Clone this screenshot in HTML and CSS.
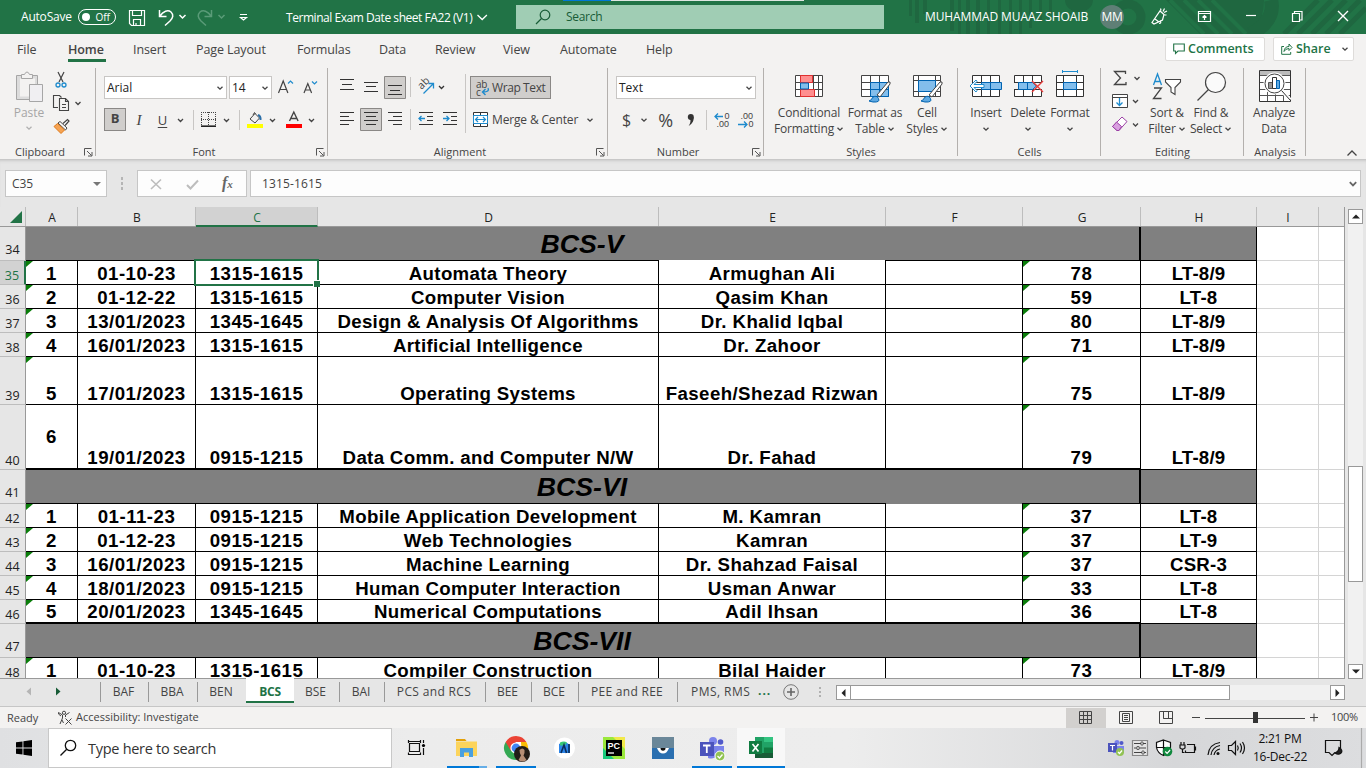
FILE: index.html
```html
<!DOCTYPE html>
<html lang="en">
<head>
<meta charset="utf-8">
<title>Terminal Exam Date sheet FA22 (V1) - Excel</title>
<link rel="stylesheet" href="styles.css">
</head>
<body>
<svg class="defs" width="0" height="0"><defs>
<symbol id="chev" viewBox="0 0 8 8"><path d="M1.500 2.700 4 5.200 6.500 2.700" fill="none" stroke="currentColor" stroke-width="1.300"/></symbol>
<symbol id="launch" viewBox="0 0 9 9"><path d="M.5 7.500V.5H7.500M3 3l4.500 4.500M8 4v4H4" fill="none" stroke="#555" stroke-width="1"/></symbol>
</defs></svg>
<div class="app">

<header class="titlebar">
  <svg class="pattern" width="460" height="34" viewBox="906 0 460 34">
    <g fill="#1f6740"><path d="M909 0h3v16h-3zM915 0h4v23h-4zM923 0h4v14h-4zM950 0h4v31h-4zM958 0h3v34h-3zM966 0h4v34h-4zM976 0h4v34h-4zM987 0h3v34h-3zM998 0h3v34h-3zM1009 0h3v34h-3zM1019 0h3v34h-3zM1029 0h3v28h-3zM1039 0h3v22h-3zM1049 0h3v14h-3z"/><path d="M1065 0h28a14 12 0 0 1-28 0z"/><path d="M1166 0h98a64 64 0 0 1-10 34h-54z"/></g>
    <circle cx="1128" cy="17" r="13" fill="none" stroke="#1f6740" stroke-width="9"/>
    <path d="M1170 0l34 34M1184 0l34 34M1198 0l34 34M1212 0l34 34" stroke="#217346" stroke-width="4"/>
    <path d="M1284 34l34-34M1298 34l34-34M1312 34l34-34M1326 34l34-34M1340 34l26-26" stroke="#1f6740" stroke-width="5"/>
    <path d="M1251 34q25-14 20-34" stroke="#1f6740" stroke-width="14" fill="none"/>
  </svg>
  <div class="topstrip"><i></i></div>
  <span class="autosave">AutoSave</span>
  <span class="toggle"><i></i><b>Off</b></span>
  <svg class="qat" width="136" height="34" viewBox="120 0 136 34" fill="none" stroke="#fff" stroke-width="1.200">
    <path d="M129.500 10.500h15v15h-13l-2-2zM132.500 10.500v5h9v-5M133.500 25.500v-6h7v6M136 23v2"/>
    <path d="M159.500 10v6.500h7M160 16c3-5 8-6.500 11-4 3 3 2 6-1 9l-5 4.500" stroke-width="1.500"/>
    <path d="M179.500 15l3 3 3-3" stroke-width="1.500"/>
    <g stroke="#5a9b78"><path d="M211.500 10v6.500h-7M211 16c-3-5-8-6.500-11-4-3 3-2 6 1 9l5 4.500" stroke-width="1.500"/><path d="M218.500 15l3 3 3-3" stroke-width="1.500"/></g>
    <path d="M240 14.500h7M240.500 17.500l3 2.500 3-2.500z"/>
  </svg>
  <span class="doc">Terminal Exam Date sheet FA22 (V1)</span>
  <svg class="doc-chev" width="12" height="34" viewBox="476 0 12 34"><path d="M477.500 15l4.700 4.500 4.700-4.500" fill="none" stroke="#fff" stroke-width="1.300"/></svg>
  <div class="search"><svg width="16" height="18" viewBox="535 8 16 18" fill="none" stroke="#185c37" stroke-width="1.200"><circle cx="545" cy="15" r="4.800"/><path d="M541.500 18.500l-5.500 5.500"/></svg><span>Search</span></div>
  <span class="user">MUHAMMAD MUAAZ SHOAIB</span>
  <span class="avatar">MM</span>
  <svg class="winctl" width="230" height="34" viewBox="1136 0 230 34" fill="none" stroke="#fff" stroke-width="1.200">
    <path d="M1152 22.500l8-11.500 4 3.500-1.500 5.500-8.500 4zM1155 19l4 3M1160 20.500q2 3-1 3M1160.500 8.500l.5 2M1164.500 8.500l-1.500 3M1167 11l-3 1.500M1166.500 15h-2"/>
    <path d="M1198.500 11.500h12v10h-12zM1198.500 13.500h12M1204.500 20v-4.500M1202.500 17.500l2-2 2 2"/>
    <path d="M1246 15.500h10"/>
    <path d="M1292.500 13.500h7v8h-7zM1294.500 13.500v-2h7.500v8.500h-2.500"/>
    <path d="M1338 11l10 10M1348 11l-10 10" stroke-width="1.400"/>
  </svg>
</header>

<nav class="tabs">
  <span class="t-file">File</span><span class="t-home">Home</span><span class="t-insert">Insert</span><span class="t-page">Page Layout</span><span class="t-form">Formulas</span><span class="t-data">Data</span><span class="t-rev">Review</span><span class="t-view">View</span><span class="t-auto">Automate</span><span class="t-help">Help</span>
  <div class="tab-actions">
    <button class="act comments"><svg width="12" height="12" viewBox="0 0 12 12"><path d="M.7 1h10.600v7H5L2.500 10.500V8H.7z" fill="none" stroke="#217346" stroke-width="1.100"/></svg>Comments</button>
    <button class="act share"><svg width="12" height="12" viewBox="0 0 12 12" fill="none" stroke="#217346"><path d="M3 3.500H.7v7.800h9V9M3 8.500q.5-5 5-5V1l3 3.500-3 3V5.500Q4.500 5.500 3 8.500z"/></svg>Share<svg class="chev" width="8" height="8"><use href="#chev"/></svg></button>
  </div>
</nav>

<section class="ribbon">
  <div class="group g-clip">
    <div class="gbody">
      <div class="paste"><svg width="34" height="36" viewBox="14 69 34 36" fill="none" stroke="#a6a6a6"><path d="M18.500 75.500h21v24h-21z" fill="#dcdcdc"/><path d="M22 78.500v18h9v-12h6v-6z" fill="#f3f2f1" stroke="none"/><path d="M23.500 78.500v-4h3q1-2.500 2.500-2.500t2.500 2.500h3v4z" fill="#f3f2f1"/><path d="M31.500 84.500h13v17h-13z" fill="#f0eff2"/></svg><span>Paste</span><svg class="chev" width="8" height="8"><use href="#chev"/></svg></div>
      <svg width="34" height="72" viewBox="51 68 34 72" fill="none" stroke="#444">
        <path d="M58 72l5 10M64 72l-5 10" stroke-width="1.200"/><g stroke="#1e8bcd" stroke-width="1.300"><circle cx="58" cy="85" r="2"/><circle cx="64" cy="85" r="2"/></g>
        <path d="M58 107.500h-4.500v-12h6l2 2M60.500 98.500h5l3 3v9h-9v-12zM65.500 98.500v3h3M62 104.500h4M62 107.500h4" stroke-width="1.100"/><path d="M75.500 102l2.500 2.500 2.500-2.500" stroke-width="1.300"/>
        <path d="M63 123.500l4.500-4 1.500 1.500-4 4.500" fill="#fff" stroke-width="1.200"/><path d="M60 121.500l7 6.500-1.500 2-7.500-7z" fill="#fff"/><path d="M57.500 123.500l7 6.500-3.500 3.500-7-7z" fill="#f5a353" stroke="#e07b1a"/>
      </svg>
    </div>
    <div class="glabel">Clipboard<svg width="9" height="9"><use href="#launch"/></svg></div>
  </div>

  <div class="group g-font">
    <div class="grows">
      <div class="row1"><span class="combo c-font">Arial<svg class="chev" width="8" height="8"><use href="#chev"/></svg></span><span class="combo c-size">14<svg class="chev" width="8" height="8"><use href="#chev"/></svg></span>
      <svg width="48" height="22" viewBox="275 76 48 22" fill="none" stroke="#444" stroke-width="1.200"><path d="M278.500 92l4.700-12 4.700 12M280 88.500h6.500M304 92l3.800-9.500 3.800 9.500M305.500 89h5"/><path d="M288 82.500l2.500-2.500 2.500 2.500M312 80.500l2.500 2.500 2.500-2.500" stroke="#1e8bcd"/></svg></div>
      <div class="row2"><span class="bold-btn">B</span><span class="it-btn">I</span><span class="un-btn">U</span>
      <svg width="150" height="22" viewBox="173 108 150 22" fill="none" stroke="#444">
        <g stroke-width="1.300"><path d="M178 118l2.500 2.500 2.500-2.500M224 118l2.500 2.500 2.500-2.500M270 118l2.500 2.500 2.500-2.500M309 118l2.500 2.500 2.500-2.500"/></g>
        <path d="M193.500 109v20M239.500 109v20" stroke="#c8c6c4"/>
        <path d="M201.500 111v13M208.500 111v13M215.500 111v13M201 111.500h15M201 118.500h15" stroke-dasharray="1 1"/><path d="M201 125.200h15" stroke="#222" stroke-width="1.600"/>
        <path d="M250 118l5-5.500 4.500 4.500-4.500 5zM253 114l1.500-2.500 1 1.500"/><path d="M258 114q3 1 2.500 5" stroke="#2b6fa8" stroke-width="2"/><path d="M247 123h16v4h-16z" fill="#ff0" stroke="none"/>
        <path d="M289.500 120l4.300-9 4.300 9M291 117.500h6" stroke-width="1.400"/><path d="M286 123h16v4h-16z" fill="red" stroke="none"/>
      </svg></div>
    </div>
    <div class="glabel">Font<svg width="9" height="9"><use href="#launch"/></svg></div>
  </div>

  <div class="group g-align">
    <div class="gbody">
    <svg width="142" height="72" viewBox="328 68 142 72" fill="none" stroke="#333">
      <path d="M384.500 76.500h21v22h-21zM360.500 108.500h21v22h-21z" fill="#d0cecc" stroke="#8a8886"/>
      <path d="M340 79.500h14M342 84.500h10M340 89.500h14M364 82.500h14M366 86.500h10M364 91.500h14M388 85.500h14M390 90.500h10M388 94.500h14"/>
      <path d="M340 112.500h14M340 116.500h9M340 120.500h14M340 124.500h9M364 112.500h14M366 116.500h10M364 120.500h14M366 124.500h10M388 112.500h14M393 116.500h9M388 120.500h14M393 124.500h9"/>
      <path d="M410.500 77v20M410.500 109v21M465.500 74v59" stroke="#c8c6c4"/>
      <text transform="translate(421.500 90) rotate(-45)" font-size="10.500" stroke="none" fill="#444">ab</text>
      <path d="M423.500 93.500l10-10M428.500 83.500h5v5" stroke="#1e8bcd" stroke-width="1.300"/><path d="M439 86l2.500 2.500 2.500-2.500" stroke-width="1.300"/>
      <path d="M419 112.500h14M427 116.500h6M427 120.500h6M419 124.500h14M443 112.500h14M451 116.500h6M451 120.500h6M443 124.500h14"/>
      <path d="M425 118.500h-6M421.500 116l-2.500 2.500 2.500 2.500M443 118.500h6M446.500 116l2.500 2.500-2.500 2.500" stroke="#1e8bcd" stroke-width="1.300"/>
    </svg>
    <div class="wrapcol">
      <span class="wrap-btn"><svg width="16" height="18" viewBox="474 78 16 18"><text x="475" y="86.500" font-size="10" fill="#444">ab</text><text x="475" y="94.500" font-size="10" fill="#444">c</text><path d="M487 87q2 4-5 4M484.500 88l-3 3 3 3" fill="none" stroke="#1e8bcd" stroke-width="1.400"/></svg>Wrap Text</span>
      <span class="merge-btn"><svg width="16" height="16" viewBox="473 111 16 16"><path d="M473.500 111.500h14v14h-14zM480.500 111.500v3M480.500 122v3" fill="#fff" stroke="#333"/><path d="M473.500 114.500h14v8h-14z" fill="#fff" stroke="#1e8bcd"/><path d="M476 118.500h9M478 116l-2.500 2.500 2.500 2.500M483 116l2.500 2.500-2.500 2.500" fill="none" stroke="#1e8bcd" stroke-width="1.200"/></svg><span>Merge &amp; Center</span><svg class="chev" width="8" height="8"><use href="#chev"/></svg></span>
    </div></div>
    <div class="glabel">Alignment<svg width="9" height="9"><use href="#launch"/></svg></div>
  </div>

  <div class="group g-num">
    <div class="grows">
      <div class="row1"><span class="combo c-num">Text<svg class="chev" width="8" height="8"><use href="#chev"/></svg></span></div>
      <div class="row2 numrow"><span class="cur">$</span><svg class="chev" width="8" height="8"><use href="#chev"/></svg><span class="pct">%</span>
      <svg width="72" height="22" viewBox="684 108 72 22" fill="none" stroke="#1e8bcd" stroke-width="1.300"><circle cx="689.800" cy="116" r="3" fill="#333" stroke="none"/><path d="M692.700 116q.3 6-5 9 2.500-4 1.500-7z" fill="#333" stroke="none"/><path d="M705.500 109v20" stroke="#c8c6c4" stroke-width="1"/><path d="M722 115.500h-8M717 112.500l-3 3 3 3M737 123.500h9M743 120.500l3 3-3 3"/><g class="dec" fill="#444" stroke="none"><text x="723.500" y="118">0</text><text x="715.500" y="126">.00</text><text x="739.500" y="118">.00</text><text x="747.500" y="126">0</text></g></svg></div>
    </div>
    <div class="glabel">Number<svg width="9" height="9"><use href="#launch"/></svg></div>
  </div>

  <div class="group g-styles">
    <div class="gbody bigs">
      <div class="big b-cond"><svg width="30" height="36" viewBox="794 70 30 36" fill="none" stroke="#555"><path d="M795.500 75.500h27v21h-27zM800.500 75.500v21M813.500 75.500v21M818.500 75.500v21M795.500 82.500h27M795.500 89.500h27" fill="#fff" stroke="#444"/><path d="M800.500 75.500h12v7h-12zM800.500 89.500h14v7h-14z" fill="#ff8f8f" stroke="#e03030"/><path d="M800.500 83h8v6h-8z" fill="#83beec" stroke="#0063b1"/></svg><span>Conditional</span><span>Formatting<svg class="chev" width="8" height="8"><use href="#chev"/></svg></span></div>
      <div class="big b-fat"><svg width="34" height="36" viewBox="858 70 34 36" fill="none" stroke="#444"><path d="M861.500 75.500h27v21h-27zM870.500 75.500v21M879.500 75.500v21M861.500 82.500h27M861.500 89.500h27" fill="#fff"/><path d="M870.500 82.500h18v14h-18zM879.500 82.500v14M870.500 89.500h18" fill="#83beec" stroke="#0063b1"/><path d="M877 95l11-13q3-1 2 2l-10 13z" fill="#fff"/><path d="M869 101q3-1 3.500-3.500 4-3 6 1t-5.500 3.500z" fill="#5ea9e2" stroke="#0063b1"/></svg><span>Format as</span><span>Table<svg class="chev" width="8" height="8"><use href="#chev"/></svg></span></div>
      <div class="big b-cs"><svg width="34" height="36" viewBox="910 70 34 36" fill="none" stroke="#444"><path d="M913.500 75.500h27v21h-27zM918.500 75.500v21M935.500 75.500v21M913.500 80.500h27M913.500 91.500h27" fill="#fff"/><path d="M918.500 80.500h17v11h-17z" fill="#83beec" stroke="#0063b1"/><path d="M929 95l11-13q3-1 2 2l-10 13z" fill="#fff"/><path d="M921 101q3-1 3.500-3.500 4-3 6 1t-5.500 3.500z" fill="#5ea9e2" stroke="#0063b1"/></svg><span>Cell</span><span>Styles<svg class="chev" width="8" height="8"><use href="#chev"/></svg></span></div>
    </div>
    <div class="glabel">Styles</div>
  </div>

  <div class="group g-cells">
    <div class="gbody bigs">
      <div class="big b-cell"><svg width="36" height="36" viewBox="969 70 36 36" fill="none" stroke="#333"><path d="M973.500 75.500h27v21h-27zM982.500 75.500v21M991.500 75.500v21M973.500 82.500h27M973.500 89.500h27" fill="#fff"/><path d="M982.500 82.500h20v7h-20zM991.500 82.500v7" fill="#83beec" stroke="#0063b1"/><path d="M985 84.500h-10l3-3-1-1.500-6 6 6 6 1-1.500-3-3h10z" fill="#fff" stroke="#1e8bcd"/></svg><span>Insert</span><svg class="chev" width="8" height="8"><use href="#chev"/></svg></div>
      <div class="big b-cell"><svg width="36" height="36" viewBox="1011 70 36 36" fill="none" stroke="#333"><path d="M1015.500 75.500h27v21h-27zM1024.500 75.500v21M1033.500 75.500v21" fill="#fff"/><path d="M1013 83h30v6h-30z" fill="#f3f2f1" stroke="none"/><path d="M1015.500 82.500h27M1015.500 89.500h27"/><path d="M1019.500 82.500h14l4 3.500-4 3.500h-14zM1028.500 82.500v7" fill="#83beec" stroke="#0063b1"/><path d="M1033 81l11 11M1044 81l-11 11" stroke="#e83b3b" stroke-width="1.400"/></svg><span>Delete</span><svg class="chev" width="8" height="8"><use href="#chev"/></svg></div>
      <div class="big b-cell"><svg width="36" height="36" viewBox="1053 70 36 36" fill="none" stroke="#333"><path d="M1057.500 75.500h27v21h-27zM1064.500 75.500v21M1077.500 75.500v21M1057.500 82.500h27M1057.500 89.500h27" fill="#fff"/><path d="M1064.500 82.500h13v7h-13z" fill="#83beec" stroke="#0063b1"/><path d="M1063.500 71.500h15M1063.500 70v3M1078.500 70v3" stroke="#1e8bcd"/></svg><span>Format</span><svg class="chev" width="8" height="8"><use href="#chev"/></svg></div>
    </div>
    <div class="glabel">Cells</div>
  </div>

  <div class="group g-edit">
    <div class="gbody">
      <svg width="36" height="72" viewBox="1107 68 36 72" fill="none" stroke="#444"><path d="M1125.500 74v-2.500h-11l6 6.500-6 6.500h11.500V82" stroke-width="1.300"/><path d="M1112.500 94.500h15v13h-15zM1112.500 97.500h15" fill="#fff"/><path d="M1119.500 98v7M1116.500 102.500l3 3 3-3" stroke="#1e8bcd" stroke-width="1.300"/><path d="M1122 117l5 4.500-8 9h-2l-4.500-4z" fill="#fff" stroke="#9b3fa5"/><path d="M1116.500 122l5 4.500-2.500 4h-2l-4.500-4z" fill="#d9a0e0" stroke="#9b3fa5"/><path d="M1134.500 77l2.500 2.500 2.500-2.500M1133 100l2.500 2.500 2.500-2.500M1133 123.500l2.500 2.500 2.500-2.500" stroke-width="1.300"/></svg>
      <div class="big b-sort"><svg width="34" height="36" viewBox="1151 70 34 36" fill="none" stroke="#444"><path d="M1154.500 85l4-11 4 11M1156 81.500h5.500" stroke="#1e8bcd" stroke-width="1.300"/><path d="M1155 88h7.500l-8 10.500h8" stroke-width="1.300"/><path d="M1166.500 79.500h15v2.500l-5.500 5.500v7l-4-2.500v-4.500l-5.500-5.500z" fill="#fff" stroke-width="1.100"/></svg><span>Sort &amp;</span><span>Filter<svg class="chev" width="8" height="8"><use href="#chev"/></svg></span></div>
      <div class="big b-find"><svg width="34" height="36" viewBox="1194 70 34 36" fill="none" stroke="#444" stroke-width="1.200"><circle cx="1215.500" cy="82.500" r="10" fill="#fafafa"/><path d="M1208.500 89.500l-11 11"/></svg><span>Find &amp;</span><span>Select<svg class="chev" width="8" height="8"><use href="#chev"/></svg></span></div>
    </div>
    <div class="glabel">Editing</div>
  </div>

  <div class="group g-an">
    <div class="gbody bigs">
      <div class="big b-an"><svg width="36" height="36" viewBox="1256 70 36 36" fill="none" stroke="#555"><path d="M1259.500 70.500h31v31h-31z" fill="#fff" stroke="#333"/><path d="M1260 71h30v4h-30z" fill="#bbb" stroke="none"/><path d="M1260 75.500h30M1260 82.500h30M1260 89.500h30M1260 95.500h30M1267.500 90v11M1275.500 90v11M1283.500 90v11"/><path d="M1282 90.500l8 9.500" stroke="#fff" stroke-width="4"/><circle cx="1274.500" cy="83.500" r="11" fill="#fff" stroke="none"/><circle cx="1274.500" cy="83.500" r="9.500" fill="#fff" stroke="#444"/><path d="M1281.500 90.500l9 10" stroke="#333"/><path d="M1268.500 82.500h4v6h-4z" fill="#999" stroke="#555"/><path d="M1272.500 77.500h4v11h-4z" fill="#fff" stroke="#333"/><path d="M1276.500 80.500h3v8h-3z" fill="#5ea9e2" stroke="#0063b1"/></svg><span>Analyze</span><span>Data</span></div>
    </div>
    <div class="glabel">Analysis</div>
  </div>
  <svg class="collapse" width="14" height="10" viewBox="0 0 14 10"><path d="M2.500 7.500 7 3l4.500 4.500" fill="none" stroke="#444" stroke-width="1.300"/></svg>
</section>

<section class="fbar">
  <div class="namebox">C35<i></i></div>
  <div class="fdots"><i></i><i></i><i></i></div>
  <div class="fbtns"><svg width="60" height="16" viewBox="147 176 60 16" fill="none" stroke="#bdbdbd" stroke-width="1.600"><path d="M150 179.500l10 9.500M160 179.500l-10 9.500"/><path d="M186 185l3.500 3.500 7.500-8" stroke-width="2"/></svg><span>f<small>x</small></span></div>
  <div class="finput"><span>1315-1615</span><svg width="8" height="8"><path d="M.800 2.200 4 5.400 7.200 2.200" fill="none" stroke="#666" stroke-width="1.800"/></svg></div>
</section>

<section class="work">
  <div class="sheet">
    <div class="cols"><span class="corner"><i></i></span><span>A</span><span>B</span><span class="sel">C</span><span>D</span><span>E</span><span>F</span><span>G</span><span>H</span><span>I</span><span></span></div>
    <div class="r band gapE"><b>34</b><em>BCS-V</em><u></u><s></s><s></s></div>
    <div class="r act35"><b>35</b><p class="f">1</p><p>01-10-23</p><p class="cur35">1315-1615</p><p>Automata Theory</p><p>Armughan Ali</p><p></p><p class="f">78</p><p>LT-8/9</p><s></s><s></s></div>
    <div class="r"><b>36</b><p class="f">2</p><p>01-12-22</p><p>1315-1615</p><p>Computer Vision</p><p>Qasim Khan</p><p></p><p class="f">59</p><p>LT-8</p><s></s><s></s></div>
    <div class="r"><b>37</b><p class="f">3</p><p>13/01/2023</p><p>1345-1645</p><p>Design &amp; Analysis Of Algorithms</p><p>Dr. Khalid Iqbal</p><p></p><p class="f">80</p><p>LT-8/9</p><s></s><s></s></div>
    <div class="r"><b>38</b><p class="f">4</p><p>16/01/2023</p><p>1315-1615</p><p>Artificial Intelligence</p><p>Dr. Zahoor</p><p></p><p class="f">71</p><p>LT-8/9</p><s></s><s></s></div>
    <div class="r h48"><b>39</b><p class="f">5</p><p>17/01/2023</p><p>1315-1615</p><p>Operating Systems</p><p>Faseeh/Shezad Rizwan</p><p></p><p class="f">75</p><p>LT-8/9</p><s></s><s></s></div>
    <div class="r h65 thick"><b>40</b><p class="mid">6</p><p>19/01/2023</p><p>0915-1215</p><p>Data Comm. and Computer N/W</p><p>Dr. Fahad</p><p></p><p class="f">79</p><p>LT-8/9</p><s></s><s></s></div>
    <div class="r band gapF"><b>41</b><em>BCS-VI</em><u></u><s></s><s></s></div>
    <div class="r"><b>42</b><p class="f">1</p><p>01-11-23</p><p>0915-1215</p><p>Mobile Application Development</p><p>M. Kamran</p><p></p><p class="f">37</p><p>LT-8</p><s></s><s></s></div>
    <div class="r"><b>43</b><p class="f">2</p><p>01-12-23</p><p>0915-1215</p><p>Web Technologies</p><p>Kamran</p><p></p><p class="f">37</p><p>LT-9</p><s></s><s></s></div>
    <div class="r"><b>44</b><p class="f">3</p><p>16/01/2023</p><p>0915-1215</p><p>Machine Learning</p><p>Dr. Shahzad Faisal</p><p></p><p class="f">37</p><p>CSR-3</p><s></s><s></s></div>
    <div class="r"><b>45</b><p class="f">4</p><p>18/01/2023</p><p>0915-1215</p><p>Human Computer Interaction</p><p>Usman Anwar</p><p></p><p class="f">33</p><p>LT-8</p><s></s><s></s></div>
    <div class="r thick"><b>46</b><p class="f">5</p><p>20/01/2023</p><p>1345-1645</p><p>Numerical Computations</p><p>Adil Ihsan</p><p></p><p class="f">36</p><p>LT-8</p><s></s><s></s></div>
    <div class="r band"><b>47</b><em>BCS-VII</em><u></u><s></s><s></s></div>
    <div class="r"><b>48</b><p class="f">1</p><p>01-10-23</p><p>1315-1615</p><p>Compiler Construction</p><p>Bilal Haider</p><p></p><p class="f">73</p><p>LT-8/9</p><s></s><s></s></div>
  </div>
  <div class="vscroll"><span class="sbtn"><svg width="8" height="5"><path d="M0 4.500h8L4 .5z" fill="#222"/></svg></span><span class="vtrack"><i></i></span><span class="sbtn"><svg width="8" height="5"><path d="M0 .5h8L4 4.500z" fill="#222"/></svg></span></div>
</section>

<section class="sheettabs">
  <svg width="100" height="27" viewBox="0 679 100 27"><path d="M31 687.500v8l-4.500-4z" fill="#b5b5b5"/><path d="M56 687.500v8l4.500-4z" fill="#185c37"/></svg>
  <span class="st s48">BAF</span><span class="st s49">BBA</span><span class="st s49 nb">BEN</span><span class="st on">BCS</span><span class="st s45 nb2">BSE</span><span class="st s45">BAI</span><span class="st s101">PCS and RCS</span><span class="st s46">BEE</span><span class="st s47">BCE</span><span class="st s99">PEE and REE</span><span class="pms">PMS, RMS</span><span class="more">...</span>
  <svg width="60" height="27" viewBox="776 679 60 27"><circle cx="791" cy="692" r="7.300" fill="none" stroke="#777"/><path d="M787 692h8M791 688v8" stroke="#666" stroke-width="1.600"/><path d="M819 687h2v2h-2zM819 691h2v2h-2zM819 695h2v2h-2z" fill="#b0b0b0"/></svg>
  <div class="hscroll"><span class="sbtn"><svg width="5" height="8"><path d="M4.500 0v8L.5 4z" fill="#222"/></svg></span><span class="hthumb"></span><span class="htrack"></span><span class="sbtn"><svg width="5" height="8"><path d="M.5 0v8l4-4z" fill="#222"/></svg></span></div>
</section>

<section class="status">
  <span class="ready">Ready</span>
  <svg width="16" height="16" viewBox="57 709 16 16" fill="none" stroke="#444"><circle cx="64" cy="711.800" r="1.600"/><path d="M58.500 711.500l4 2.500v3l-2.500 6M69.500 711.500l-4 2.500v2M62 719l1.500 3M58.500 711.500q-1 1.500 2.500 3.500M65.500 717.500l6 6M71.500 717.500l-6 6"/></svg>
  <span class="access">Accessibility: Investigate</span>
  <svg class="views" width="264" height="20" viewBox="1066 707 264 20" fill="none" stroke="#444">
    <path d="M1066 707h40v20h-40z" fill="#d2d0ce" stroke="none"/>
    <path d="M1079.500 710.500h12v12h-12zM1083.500 710.500v12M1087.500 710.500v12M1079.500 714.500h12M1079.500 718.500h12"/>
    <path d="M1119.500 710.500h13v12h-13zM1122.500 712.500h7v8h-7zM1124 714.500h4M1124 716.500h4M1124 718.500h4"/>
    <path d="M1159.500 710.500h13v12h-13zM1163.500 710.500v7h5v-7M1163.500 717.500h9"/>
    <path d="M1192 716.500h8M1205 717.500h100M1310 716.500h8M1314 712.500v8"/><path d="M1253 711h5v11h-5z" fill="#333" stroke="none"/>
  </svg>
  <span class="zoom">100%</span>
</section>

<footer class="taskbar">
  <svg width="48" height="40" viewBox="0 728 48 40"><path d="M16 742.300l6.500-.9v6.100H16zM23.400 741.300l8.600-1.300v7.500h-8.600zM16 748.400h6.500v6.200l-6.500-.9zM23.400 748.400h8.600v7.600l-8.600-1.300z" fill="#000"/></svg>
  <div class="tsearch"><svg width="18" height="18" viewBox="59 739 18 18" fill="none" stroke="#111" stroke-width="1.300"><circle cx="70.500" cy="745.500" r="5.200"/><path d="M66.700 749.300l-6.200 6.200"/></svg><span>Type here to search</span></div>
  <svg width="400" height="40" viewBox="392 728 400 40">
    <path d="M737 728h48v40h-48z" fill="#f8f8f8"/>
    <g fill="none" stroke="#111" stroke-width="1.200"><path d="M409.500 743.500h10v8h-10zM408.500 743v-3M408.500 741.500h12M420.500 743v-3M408.500 755v-2.500M408.500 754.500h12v-2M423.500 740v3M423.500 748v7"/></g><circle cx="423.500" cy="745.500" r="1.600"/>
    <path d="M456 739h9l1.500 2h-10.500z" fill="#e3a008"/><path d="M456 741.500h21V756h-21z" fill="#fcd45c"/><path d="M460 757v-9h13v9h-4v-4.500h-5v4.500z" fill="#4aa0e0"/>
    <circle cx="516" cy="748" r="12" fill="#fff"/><path d="M505.600 742A12 12 0 0 0 516 760l5-9-5-3z" fill="#34a853"/><path d="M526.400 742A12 12 0 0 1 516 760l5.500-9-.5-9z" fill="#fbbc05"/><path d="M505.600 742a12 12 0 0 1 20.800 0H516l-5 9z" fill="#ea4335"/><circle cx="516" cy="748" r="5.600" fill="#fff"/><circle cx="516" cy="748" r="4.400" fill="#4285f4"/>
    <circle cx="522" cy="754" r="8" fill="#221c17"/><path d="M519.500 750q3-3 5 0 .5 4-1 5.500l3 4.500q-4 3-8 0l2.500-4.500q-1.500-2-1.500-5.500z" fill="#b58d74"/>
    <circle cx="564.500" cy="748" r="10.500" fill="#fff"/><path d="M559 744q6-4 11 1v8h-11z" fill="#2c85e8"/><path d="M560 742.500q4-2 7 0l-2 3h-5z" fill="#38c976"/><path d="M561 753l3-8 2.500 8M569 744v9" stroke="#0b2d5c" stroke-width="1.600" fill="none"/>
    <path d="M603 737h22v22h-22z" fill="#9be83c"/><path d="M613 737h12v12z" fill="#f2e94a"/><path d="M603 748v11h11z" fill="#19c97c"/><path d="M606 740h16v16h-16z" fill="#000"/><text class="pc" x="607.500" y="748.500" fill="#fff">PC</text><path d="M608 753h6" stroke="#fff" stroke-width="1.300"/>
    <path d="M652 737h22v11h-22z" fill="#6a8799"/><path d="M652 748h22v11h-22z" fill="#2a6fb0"/><path d="M657 748h12q-2 5.500-6 5.500t-6-5.500z" fill="#fff"/><path d="M660.500 748h5q0 2.800-2.500 2.800t-2.500-2.800z" fill="#111"/>
    <circle cx="713" cy="741" r="4" fill="#7b83eb"/><circle cx="720.500" cy="742" r="2.800" fill="#5059c9"/><path d="M708 746h9v9q-3 5-9 3zM717 746h7v6q-1 4-5 4h-2z" fill="#7b83eb"/><path d="M700 742h14v14h-14z" fill="#4b53bc"/><path d="M703 745.500h7.500M706.800 745.500v7.500" stroke="#fff" stroke-width="1.800"/><circle cx="720" cy="756" r="5" fill="#92c353" stroke="#fff"/><path d="M717.500 756l2 2 3-3.500" fill="none" stroke="#fff" stroke-width="1.300"/>
    <path d="M755 737h18v21h-18z" fill="#21a366"/><path d="M764 737h9v5h-9z" fill="#33c481"/><path d="M764 747.500h9v5.500h-9z" fill="#107c41"/><path d="M755 753h18v5h-18z" fill="#185c37"/><path d="M749 741h13v13h-13z" fill="#107c41"/><path d="M752.500 744l6 7.500M758.500 744l-6 7.500" stroke="#fff" stroke-width="1.700"/>
    <path d="M447 766h32v2h-32zM496 766h40v2h-40zM692 766h40v2h-40zM737 766h48v2h-48z" fill="#0078d7"/><path d="M479 766h8v2h-8z" fill="#66aee7"/>
  </svg>
  <svg class="tray" width="144" height="40" viewBox="1104 728 144 40" fill="none" stroke="#111" stroke-width="1.200">
    <g stroke="none"><circle cx="1117" cy="742.500" r="2.500" fill="#7b83eb"/><circle cx="1121.500" cy="743" r="2" fill="#5059c9"/><path d="M1113 746h11v7h-11z" fill="#7b83eb"/><path d="M1108 743h9v9h-9z" fill="#4b53bc"/><circle cx="1120" cy="752" r="4" fill="#92c353"/></g><path d="M1110 745.500h5M1112.500 745.500v5M1118 752l1.500 1.500 2.500-3" stroke="#fff"/>
    <path d="M1132.500 740.500h15v15h-15z" fill="#e4e4e4" stroke="#888"/><path d="M1134 743.500h12M1134 748h12M1134 752.500h12" stroke="#444"/><path d="M1141 742h2v3h-2zM1137 746.500h2v3h-2zM1142 751h2v3h-2z" fill="#fff" stroke="#444" stroke-width=".8"/>
    <path d="M1163.500 740l7 2.500v5q-1 5.500-7 8-6-2.500-7-8v-5zM1163.500 740v15M1157 747.500h13.500" fill="#fff"/><circle cx="1167.500" cy="751.500" r="4.800" fill="#10893e" stroke="none"/><path d="M1165.300 751.500l1.800 1.800 3-3.300" stroke="#fff"/>
    <path d="M1187 744.500h7.500v8h-9v-2M1195.500 746.500v4M1181 742v3M1184 742v3M1180 745h5v3l-1.500 1h-2l-1.500-1zM1182.500 749v3.500h2"/>
    <path d="M1208 755q1-11 12-12.500M1211 755q1-8 9-9.500M1214 755q1-5 6-6"/><circle cx="1218" cy="753.500" r="1.500" fill="#111" stroke="none"/>
    <path d="M1228.500 745.500h3l4-4v13l-4-4h-3zM1237.500 745.500q1.500 2.500 0 5M1240 743.500q3 4.500 0 9M1242.500 742q4 6 0 12"/>
  </svg>
  <div class="clock"><span class="tm">2:21 PM</span><span class="dt">16-Dec-22</span></div>
  <svg width="44" height="40" viewBox="1322 728 44 40" fill="none" stroke="#111" stroke-width="1.200"><path d="M1335 752.500l-3 3-3-3h-3.500v-12h15v8"/><path d="M1339 747.500q0 4-4 5.500 3.500 2.500 6 0t-2-5.500z" fill="#222"/><path d="M1361.500 728v40" stroke="#aaa"/></svg>
</footer>
</div>
</body>
</html>
```
FILE: styles.css
```css
* { box-sizing: border-box; }
body { margin: 0; background: #e6e6e6; font: 12px/16px "Open Sans", "Noto Sans", sans-serif; color: #444; }
.defs { position: absolute; }
svg { display: block; flex: none; }
svg text { font-family: "Open Sans", sans-serif; }
svg .dec text { font: 9px "Liberation Sans", sans-serif; }
svg .pc { font: 700 9px "Liberation Sans", sans-serif; }
.app { width: 1366px; height: 768px; overflow: hidden; display: flex; flex-direction: column; }
.app > * { flex: none; white-space: nowrap; }

/* title bar */
.titlebar { position: relative; height: 34px; background: #217346; color: #fff; display: flex; align-items: center; }
.titlebar > * { position: relative; flex: none; }
.titlebar .pattern { position: absolute; right: 0; top: 0; }
.titlebar .topstrip { position: absolute; left: 563px; top: 0; width: 241px; height: 1px; background: #dfe6e2; }
.topstrip i { display: block; width: 48px; height: 1px; background: #0078d7; }
.autosave { width: 57px; margin-left: 21px; letter-spacing: -.2px; }
.toggle { width: 38px; height: 16px; border: 1px solid #fff; border-radius: 8px; display: flex; align-items: center; justify-content: space-between; padding: 0 5px 0 3px; }
.toggle i { width: 8px; height: 8px; border-radius: 50%; background: #fff; }
.toggle b { font-weight: 400; font-size: 10px; }
.qat { margin-left: 4px; }
.doc { width: 188px; margin-left: 30px; letter-spacing: -.45px; padding-top: 1px; }
.doc-chev { margin-left: 2px; }
.search { width: 368px; height: 24px; margin-left: 28px; background: #a0cdb4; color: #185c37; display: flex; align-items: center; padding-left: 19px; margin-top: -1px; }
.search span { margin-left: 15px; letter-spacing: -.3px; }
.user { width: 164px; margin-left: 41px; letter-spacing: -.1px; }
.avatar { width: 24px; height: 24px; margin-left: 11px; border-radius: 50%; background: #5f7f76; line-height: 24px; text-align: center; letter-spacing: -.3px; }
.winctl { margin-left: auto; }

/* ribbon tabs */
.tabs { height: 32px; background: #f3f2f1; display: flex; font-size: 12.500px; line-height: 31px; letter-spacing: -.1px; }
.tabs > span { flex: none; }
.t-file { width: 51px; margin-left: 17px; }
.t-home { width: 38px; margin-right: 27px; font-weight: 600; border-bottom: 3px solid #217346; height: 28px; }
.t-insert { width: 63px; } .t-page { width: 101px; } .t-form { width: 82px; } .t-data { width: 56px; } .t-rev { width: 68px; } .t-view { width: 57px; } .t-auto { width: 86px; }
.tab-actions { margin-left: auto; display: flex; gap: 8px; padding: 3px 12px 0 0; }
.act { height: 24px; background: #fff; border: 1px solid #dedcda; border-radius: 2px; font: 600 12.500px/20px "Open Sans", sans-serif; color: #217346; display: flex; align-items: center; gap: 3px; padding: 0 0 0 7px; }
.comments { width: 100px; }
.share { width: 81px; }
.share .chev { margin-left: 7px; }

/* ribbon */
.ribbon { position: relative; height: 94px; background: #f3f2f1; border-bottom: 1px solid #c8c8c8; display: flex; padding-top: 2px; }
.group { height: 92px; position: relative; flex: none; display: flex; flex-direction: column; }
.group::after { content: ""; position: absolute; right: 0; top: 0; width: 1px; height: 88px; background: #b3b0ad; }
.gbody, .grows { height: 76px; flex: none; }
.gbody { display: flex; }
.glabel { height: 16px; display: flex; justify-content: center; font-size: 11px; line-height: 15px; color: #444; position: relative; }
.glabel svg { position: absolute; right: 3px; top: 4px; }
.g-clip { width: 96px; } .g-font { width: 232px; } .g-align { width: 280px; } .g-num { width: 156px; } .g-styles { width: 194px; } .g-cells { width: 143px; } .g-edit { width: 143px; } .g-an { width: 62px; }
.g-clip .glabel, .g-font .glabel, .g-align .glabel, .g-num .glabel { padding-right: 16px; }
.chev { color: #444; }
.paste { width: 51px; padding: 1px 0 0 7px; display: flex; flex-direction: column; align-items: center; color: #a6a6a6; }
.paste .chev { color: #b0b0b0; margin-top: 3px; }
.row1, .row2 { display: flex; padding-left: 8px; align-items: center; height: 23px; }
.row1 { margin-top: 8px; }
.row2 { margin-top: 9px; }
.combo { height: 23px; background: #fff; border: 1px solid #c8c6c4; display: flex; align-items: center; justify-content: space-between; padding: 0 2px; line-height: 20px; color: #222; flex: none; }
.c-font { width: 123px; margin-right: 2px; }
.c-size { width: 43px; margin-right: 3px; }
.c-num { width: 140px; }
.bold-btn { width: 22px; height: 23px; background: #d0cecc; border: 1px solid #8a8886; text-align: center; font: 700 13px/19px "Open Sans", sans-serif; }
.it-btn { width: 26px; text-align: center; font: italic 15px/20px "Liberation Serif", serif; }
.un-btn { width: 21px; text-align: center; font-size: 13px; line-height: 18px; text-decoration: underline; text-underline-offset: 2px; }
.wrap-btn { margin-top: 8px; width: 81px; height: 23px; background: #d0cecc; border: 1px solid #8a8886; display: flex; align-items: center; padding-left: 4px; gap: 1px; letter-spacing: -.4px; }
.wrap-btn svg { overflow: visible; }
.merge-btn { display: flex; align-items: center; height: 23px; margin-top: 9px; padding-left: 3px; gap: 3px; letter-spacing: -.15px; }
.merge-btn .chev { margin-left: 5px; }
.numrow { padding-left: 14px; }
.cur { font-size: 16px; width: 11px; margin-right: 8px; }
.pct { font-size: 18px; width: 20px; margin: 0 8px 0 10px; }
.numrow .chev + .pct + svg { margin-left: auto; margin-right: 7px; }
.big { display: flex; flex-direction: column; align-items: center; padding-top: 2px; letter-spacing: -.15px; }
.big > span { display: flex; align-items: center; gap: 2px; height: 16px; }
.big > svg + span { margin-top: -1px; }
.big > span + .chev { margin-top: 4px; }
.b-cond { width: 74px; margin-left: 8px; } .b-fat { width: 58px; } .b-cs { width: 46px; }
.b-cell { width: 42px; } .g-cells .bigs { padding-left: 7px; }
.g-edit .gbody > svg { margin-left: 6px; }
.b-sort { width: 46px; margin-left: 1px; } .b-find { width: 42px; }
.b-an { width: 60px; }
.collapse { position: absolute; right: 7px; bottom: 1px; }

/* formula bar */
.fbar { height: 47px; background: #e6e6e6; display: flex; padding: 10px 5px 0; box-shadow: inset 0 3px 3px -2px #c9c9c9; }
.fbar > div { height: 27px; border: 1px solid #c6c6c6; background: #fdfdfd; display: flex; align-items: center; }
.namebox { width: 102px; padding: 0 5px 0 6px; justify-content: space-between; letter-spacing: -.1px; }
.namebox i { border: 4px solid transparent; border-top: 4px solid #777; border-bottom: 0; }
.fbar .fdots { width: 30px; border: 0; background: none; flex-direction: column; justify-content: center; gap: 2px; }
.fdots i { width: 2px; height: 3px; background: #b5b5b5; }
.fbtns { width: 110px; padding-left: 10px; margin-right: 3px; }
.fbtns span { font: italic 600 16px/20px "Liberation Serif", serif; margin-left: 14px; color: #666; }
.fbtns small { font-size: 11px; }
.finput { flex: 1; padding: 0 3px 0 11px; justify-content: space-between; letter-spacing: .15px; }

/* sheet */
.work { height: 472px; display: flex; }
.sheet { width: 1345px; height: 472px; overflow: hidden; border-right: 1px solid #999; border-bottom: 1px solid #999; background: #fff; }
.cols, .r { display: grid; grid-template-columns: 26px 52px 118px 122px 341px 227px 137px 118px 116px 62px 25px; }
.cols { height: 20px; background: #e6e6e6; border-bottom: 1px solid #999; color: #222; line-height: 21px; text-align: center; }
.cols span { border-right: 1px solid #bdbdbd; height: 19px; padding-left: 1px; }
.cols .sel { background: #d2d2d2; color: #217346; border-bottom: 2px solid #217346; height: 20px; }
.cols span:last-child { border: 0; }
.cols .corner { display: flex; justify-content: flex-end; align-items: flex-end; padding: 0 3px 3px 0; }
.corner i { width: 12px; height: 12px; background: #217346; clip-path: polygon(100% 0, 100% 100%, 0 100%); }
.r { height: 24px; }
.h48 { height: 48px; } .h65 { height: 65px; } .band { height: 34px; }
.r > * { margin: 0; min-width: 0; border-right: 1px solid #000; border-bottom: 1px solid #000; display: flex; justify-content: center; align-items: flex-end; position: relative; }
.r > p { font: 700 18.670px/21px "Liberation Sans", Arial, sans-serif; letter-spacing: .5px; color: #000; }
.r > p:nth-child(5) { letter-spacing: .33px; }
.r > p:nth-child(6) { letter-spacing: .42px; }
.r > p:nth-child(9) { letter-spacing: .2px; }
.r > b { background: #e6e6e6; border-right-color: #999; border-bottom-color: #bdbdbd; font-weight: 400; font-size: 12.500px; line-height: 16px; color: #222; }
.r.band > b { line-height: 20px; }
.r > s { border-color: #d4d4d4; text-decoration: none; }
.r > s:last-child { border-right: 0; }
.f::before { content: ""; position: absolute; left: 0; top: 0; width: 7px; height: 6px; background: #0a7d0a; clip-path: polygon(0 0, 100% 0, 0 100%); }
.thick > p { border-bottom-width: 2px; line-height: 20px; }
.thick > p:nth-child(9) { border-bottom-width: 1px; padding-bottom: 1px; }
.r .mid { align-items: center; padding-top: 1px; }
.band > em { grid-column: 2 / 9; background: #808080; border-right-width: 2px; font: italic 700 26.670px/31px "Liberation Sans", Arial, sans-serif; color: #000; padding-right: 1px; }
.band > u { background: #808080; }
.gapE > em::after, .gapF > em::after { content: ""; position: absolute; bottom: -1px; height: 1px; }
.gapE > em::after { left: 633px; width: 226px; background: #fff; }
.gapF > em::after { left: 860px; width: 136px; background: #808080; }
.act35 > b { background: #d2d2d2; color: #217346; border-right: 2px solid #217346; }
.cur35::before { content: ""; position: absolute; inset: -2px; border: 2px solid #217346; z-index: 2; }
.cur35::after { content: ""; position: absolute; right: -3px; bottom: -3px; width: 6px; height: 6px; background: #217346; border: solid #fff; border-width: 1px 0 0 1px; z-index: 3; }

.vscroll { width: 21px; padding: 2px 3px 0; display: flex; flex-direction: column; }
.sbtn { width: 15px; height: 15px; border: 1px solid #999; background: #fff; display: flex; align-items: center; justify-content: center; flex: none; }
.vtrack { height: 440px; background: #f1f1f1; padding-top: 242px; }
.vtrack i { display: block; width: 15px; height: 116px; background: #fff; border: 1px solid #999; }

/* sheet tabs */
.sheettabs { height: 28px; display: flex; border-bottom: 1px solid #c6c6c6; }
.st { height: 20px; margin-top: 3px; padding-right: 2px; border-right: 1px solid #999; text-align: center; line-height: 20px; flex: none; }
.s48 { width: 49px; border-left: 1px solid #999; } .s49 { width: 49px; } .s45 { width: 45px; } .s101 { width: 101px; letter-spacing: .35px; } .s46 { width: 46px; } .s47 { width: 47px; } .s99 { width: 99px; letter-spacing: .3px; }
.st.nb { border-right: 0; width: 48px; }
.st.on { width: 48px; height: 25px; margin-top: -1px; padding: 0; background: #fff; border: 0; border-bottom: 2px solid #217346; color: #217346; font-weight: 700; line-height: 27px; letter-spacing: -.3px; }
.st.nb2 { width: 46px; }
.pms { margin-left: 13px; width: 67px; line-height: 26px; letter-spacing: .45px; }
.more { width: 18px; line-height: 24px; font-weight: 700; color: #217346; letter-spacing: 1px; }
.hscroll { display: flex; padding-top: 6px; }
.hthumb { width: 379px; height: 15px; background: #fff; border: 1px solid #999; border-left: 0; }
.htrack { width: 100px; height: 15px; background: #f1f1f1; }

/* status bar */
.status { height: 21px; background: #f3f2f1; display: flex; align-items: center; font-size: 11px; }
.ready { width: 50px; margin-left: 7px; }
.access { margin-left: 3px; margin-top: -1px; }
.views { margin-left: auto; }
.zoom { width: 36px; padding-left: 1px; letter-spacing: -.3px; margin-top: -1px; }

/* task bar */
.taskbar { height: 40px; background: linear-gradient(90deg, #dfe0e2 0, #ececec 30%, #ededed 62%, #d6d7d9 86%, #dcdddf 100%); display: flex; align-items: center; }
.tsearch { width: 344px; height: 40px; background: #fff; border: 1px solid #c8c8c8; display: flex; align-items: center; padding-left: 10px; font-size: 14.500px; color: #333; letter-spacing: -.28px; }
.tsearch span { margin-left: 11px; padding-top: 1px; }
.tray { margin-left: auto; }
.clock { width: 64px; margin-right: 10px; display: flex; flex-direction: column; align-items: center; color: #111; line-height: 18px; letter-spacing: -.25px; margin-top: -1px; }
```
